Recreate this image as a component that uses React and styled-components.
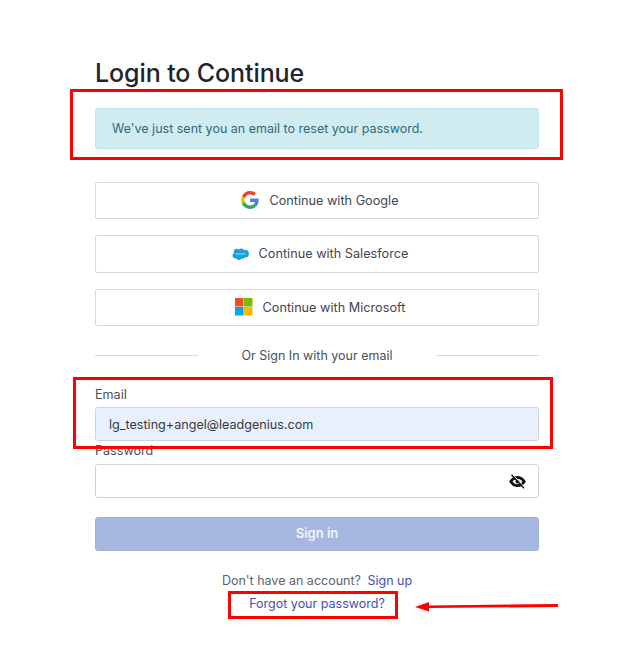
import React from 'react';
import styled, { createGlobalStyle } from 'styled-components';

const GlobalStyle = createGlobalStyle`
  html, body {
    margin: 0;
    padding: 0;
    background: #fff;
    font-family: "Inter", "Open Sans", sans-serif;
    color: #343a40;
  }
`;

const Page = styled.div`
  position: relative;
  width: 627px;
  height: 666px;
  overflow: hidden;
  padding: 58px 88px 0 95px;
  box-sizing: border-box;
`;
const Title = styled.h1`
  margin: 0 0 19px;
  height: 31px;
  font-size: 25px;
  line-height: 31px;
  font-weight: 500;
  letter-spacing: -0.1px;
  color: #212529;
`;
const Alert = styled.div`
  height: 41px;
  box-sizing: border-box;
  display: flex;
  align-items: center;
  padding: 0 16px 1px;
  margin-bottom: 33px;
  background: #d1ecf1;
  border: 1px solid #bee5eb;
  border-radius: 3px;
  color: #2f6a77;
  font-size: 12.5px;
`;
const Providers = styled.div`
  display: flex;
  flex-direction: column;
  gap: 16px;
`;
const ProviderButton = styled.button`
  height: ${p => p.$h || 37}px;
  width: 100%;
  display: flex;
  align-items: center;
  justify-content: center;
  gap: 10px;
  background: #fff;
  border: 1px solid #d9d9d9;
  border-radius: 2px;
  font: inherit;
  font-size: 12.7px;
  color: #3f4650;
  padding: 0 0 1px 6px;
`;
const Divider = styled.div`
  display: flex;
  align-items: center;
  height: 20px;
  margin: 19px 0 22px;
  font-size: 12.5px;
  color: #495057;
  &::before, &::after {
    content: '';
    height: 1px;
    width: 103px;
    background: #d9d9d9;
  }
  span {
    flex: 1;
    text-align: center;
  }
`;
const Label = styled.label`
  display: block;
  font-size: 12.6px;
  line-height: 16px;
  color: #495057;
  margin-top: ${p => p.$mt}px;
  margin-bottom: ${p => p.$mb}px;
`;
const Field = styled.div`
  position: relative;
  margin-bottom: ${p => p.$mb}px;
`;
const Input = styled.div`
  height: 34px;
  box-sizing: border-box;
  display: flex;
  align-items: center;
  justify-content: space-between;
  padding: 0 12px 0 13px;
  background: ${p => (p.$filled ? '#e8f0fe' : '#fff')};
  border: 1px solid #ced4da;
  border-radius: 3px;
  font-size: 12.6px;
  color: #343a40;
`;
const SignIn = styled.button`
  display: block;
  width: 100%;
  height: 34px;
  background: #a6b8e0;
  border: 1px solid #a0b1d6;
  border-radius: 3px;
  color: #f2f5fb;
  font: inherit;
  font-size: 13px;
  font-weight: 600;
  padding: 0 0 2px;
`;
const Footer = styled.div`
  margin-top: 18px;
  text-align: center;
  font-size: 12.5px;
  line-height: 23px;
  color: #5c6268;
`;
const FooterLink = styled.a`
  color: #3f51b5;
  text-decoration: none;
  margin-left: ${p => p.$ml || 0}px;
`;

const RedBox = styled.div`
  position: absolute;
  box-sizing: border-box;
  border: 3px solid #f00;
  left: ${p => p.$x}px;
  top: ${p => p.$y}px;
  width: ${p => p.$w}px;
  height: ${p => p.$h}px;
`;
const Arrow = styled.svg`
  position: absolute;
  left: 410px;
  top: 597px;
`;

const GoogleIcon = () => (
  <svg width="18" height="18" viewBox="0 0 48 48">
    <path fill="#EA4335" d="M24 9.5c3.54 0 6.71 1.22 9.21 3.6l6.85-6.85C35.9 2.38 30.47 0 24 0 14.62 0 6.51 5.38 2.56 13.22l7.98 6.19C12.43 13.72 17.74 9.5 24 9.5z" />
    <path fill="#4285F4" d="M46.98 24.55c0-1.57-.15-3.09-.38-4.55H24v9.02h12.94c-.58 2.96-2.26 5.48-4.78 7.18l7.73 6c4.51-4.18 7.09-10.36 7.09-17.65z" />
    <path fill="#FBBC05" d="M10.53 28.59c-.48-1.45-.76-2.99-.76-4.59s.27-3.14.76-4.59l-7.98-6.19C.92 16.46 0 20.12 0 24c0 3.88.92 7.54 2.56 10.78l7.97-6.19z" />
    <path fill="#34A853" d="M24 48c6.48 0 11.93-2.13 15.89-5.81l-7.73-6c-2.15 1.45-4.92 2.3-8.16 2.3-6.26 0-11.57-4.22-13.47-9.91l-7.98 6.19C6.51 42.62 14.62 48 24 48z" />
  </svg>
);

const SalesforceIcon = () => (
  <svg width="17" height="12" viewBox="0 0 17 12">
    <path fill="#1d9fdc" d="M7 1.600C7.600 1 8.400.6 9.300.6c1.100 0 2.100.6 2.600 1.500.5-.2 1-.3 1.500-.3 2 0 3.600 1.700 3.600 3.900s-1.600 3.900-3.600 3.900c-.3 0-.5 0-.7-.1-.5.8-1.300 1.300-2.200 1.300-.4 0-.8-.1-1.100-.3-.5 1-1.400 1.600-2.500 1.600s-2.100-.7-2.500-1.700c-.2 0-.4.100-.6.100C2 10.500.6 9.200.6 7.500c0-1.100.6-2.100 1.400-2.600-.2-.4-.3-.8-.3-1.200C1.700 2 3.100.7 4.700.7c.9 0 1.700.3 2.300.9z" />
    <path stroke="#bfe6f7" strokeWidth="0.8" d="M3.500 6h10" />
  </svg>
);

const MicrosoftIcon = () => (
  <svg width="18" height="18" viewBox="0 0 18 18">
    <rect width="8.500" height="8.500" fill="#f25022" />
    <rect x="9" width="8.500" height="8.500" fill="#7fba00" />
    <rect y="9" width="8.500" height="8.500" fill="#00a4ef" />
    <rect x="9" y="9" width="8.500" height="8.500" fill="#ffb900" />
  </svg>
);

const EyeOffIcon = () => (
  <svg width="17" height="15" viewBox="0 0 17 15">
    <path fill="none" stroke="#111" strokeWidth="2.800" d="M1.800 7.500C3.700 4.500 5.900 3.300 8.500 3.300s4.800 1.200 6.700 4.200c-1.900 3-4.100 4.200-6.700 4.200s-4.800-1.200-6.700-4.200z" />
    <circle cx="8.500" cy="7.500" r="2" fill="#111" />
    <path stroke="#fff" strokeWidth="1" d="M3.600.4l12.400 13.200" />
    <path stroke="#111" strokeWidth="1.400" d="M2.500 .8l12.500 13.400" />
  </svg>
);

export default function App() {
  return (
    <Page>
      <GlobalStyle />
      <Title>Login to Continue</Title>
      <Alert>We've just sent you an email to reset your password.</Alert>
      <Providers>
        <ProviderButton><GoogleIcon />Continue with Google</ProviderButton>
        <ProviderButton $h={38}><SalesforceIcon />Continue with Salesforce</ProviderButton>
        <ProviderButton><MicrosoftIcon />Continue with Microsoft</ProviderButton>
      </Providers>
      <Divider><span>Or Sign In with your email</span></Divider>
      <Field $mb={0}>
        <Label $mt={0} $mb={4}>Email</Label>
        <Input $filled>lg_testing+angel@leadgenius.com</Input>
      </Field>
      <Field $mb={19}>
        <Label $mt={2} $mb={5}>Password</Label>
        <Input><span /><EyeOffIcon /></Input>
      </Field>
      <SignIn>Sign in</SignIn>
      <Footer>
        <div>Don't have an account? <FooterLink $ml={3}>Sign up</FooterLink></div>
        <div><FooterLink>Forgot your password?</FooterLink></div>
      </Footer>
      <RedBox $x={70} $y={89} $w={493} $h={71} />
      <RedBox $x={73} $y={377} $w={480} $h={72} />
      <RedBox $x={228} $y={591} $w={170} $h={28} />
      <Arrow width="152" height="18" viewBox="0 0 152 18">
        <path d="M5 10 L19 5 L19 8.500 L148 7 L148 10 L19 11 L19 14.500 Z" fill="#f00" />
      </Arrow>
    </Page>
  );
}
